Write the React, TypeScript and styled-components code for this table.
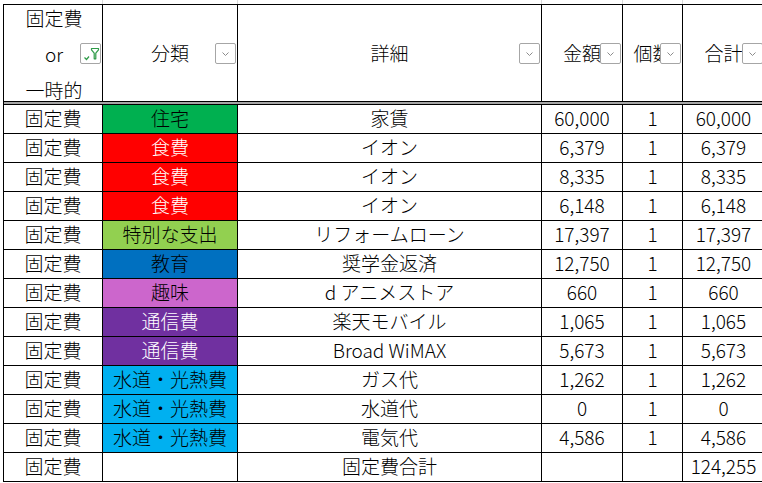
import React from "react";
import styled, { createGlobalStyle } from "styled-components";

const GlobalStyle = createGlobalStyle`
	html, body {
		margin: 0;
		padding: 0;
		background: #ffffff;
		overflow: hidden;
	}
	body {
		font-family: "Noto Sans CJK JP", "Noto Sans", sans-serif;
		font-weight: 300;
		color: #000000;
	}
`;

const COLUMNS = "99px 135px 304px 81px 60px 82px";

type Category = { bg: string; fg: string };

const CATEGORIES: Record<string, Category> = {
	住宅: { bg: "#00b050", fg: "#000000" },
	食費: { bg: "#ff0000", fg: "#ffffff" },
	特別な支出: { bg: "#92d050", fg: "#000000" },
	教育: { bg: "#0070c0", fg: "#000000" },
	趣味: { bg: "#cc66cc", fg: "#000000" },
	通信費: { bg: "#7030a0", fg: "#ffffff" },
	"水道・光熱費": { bg: "#00b0f0", fg: "#000000" },
};

const rows = [
	["固定費", "住宅", "家賃", "60,000", "1", "60,000"],
	["固定費", "食費", "イオン", "6,379", "1", "6,379"],
	["固定費", "食費", "イオン", "8,335", "1", "8,335"],
	["固定費", "食費", "イオン", "6,148", "1", "6,148"],
	["固定費", "特別な支出", "リフォームローン", "17,397", "1", "17,397"],
	["固定費", "教育", "奨学金返済", "12,750", "1", "12,750"],
	["固定費", "趣味", "d アニメストア", "660", "1", "660"],
	["固定費", "通信費", "楽天モバイル", "1,065", "1", "1,065"],
	["固定費", "通信費", "Broad WiMAX", "5,673", "1", "5,673"],
	["固定費", "水道・光熱費", "ガス代", "1,262", "1", "1,262"],
	["固定費", "水道・光熱費", "水道代", "0", "1", "0"],
	["固定費", "水道・光熱費", "電気代", "4,586", "1", "4,586"],
	["固定費", "", "固定費合計", "", "", "124,255"],
];

const headers = ["分類", "詳細", "金額", "個数", "合計"];

const Chevron = () => (
	<svg width="9" height="6" viewBox="0 0 9 6">
		<path d="M1.5 1.5 L4.5 4.5 L7.5 1.5" fill="none" stroke="#8c8c8c" strokeWidth="1" />
	</svg>
);

const FilterOn = () => (
	<svg width="18" height="18" viewBox="0 0 18 18">
		<path d="M2.5 12.5 L4.5 14.5 L7 11.5" fill="none" stroke="#2e9b48" strokeWidth="1.2" />
		<path
			d="M9.5 3.5 H16.5 V4.8 L13.8 8.2 V13.8 H12.2 V8.2 L9.5 4.8 Z"
			fill="none"
			stroke="#2e9b48"
			strokeWidth="1.2"
			strokeLinejoin="round"
		/>
	</svg>
);

export default function App() {
	return (
		<>
			<GlobalStyle />
			<Page>
				<TopStrip>
					{[0, 1, 2, 3, 4, 5].map((i) => (
						<StripCell key={i} />
					))}
				</TopStrip>
				<Sheet>
					<HeaderCell>
						<HeaderStack>
							<span>固定費</span>
							<span>or</span>
							<span>一時的</span>
						</HeaderStack>
						<DropButton>
							<FilterOn />
						</DropButton>
					</HeaderCell>
					{headers.map((h) => (
						<HeaderCell key={h}>
							<HeaderLabel>{h}</HeaderLabel>
							<DropButton>
								<Chevron />
							</DropButton>
						</HeaderCell>
					))}
					<PaneSplit />
					{rows.map((r, i) => {
						const cat = CATEGORIES[r[1]];
						return (
							<React.Fragment key={i}>
								<Cell>{r[0]}</Cell>
								<Cell $bg={cat?.bg} $fg={cat?.fg}>
									{r[1]}
								</Cell>
								<Cell>{r[2]}</Cell>
								<Cell>{r[3]}</Cell>
								<Cell>{r[4]}</Cell>
								<Cell>{r[5]}</Cell>
							</React.Fragment>
						);
					})}
				</Sheet>
			</Page>
		</>
	);
}

const Page = styled.div`
	padding-left: 3px;
	width: 765px;
`;

const TopStrip = styled.div`
	display: grid;
	grid-template-columns: ${COLUMNS};
	margin-left: 1px;
	height: 4px;
`;

const StripCell = styled.div`
	border-right: 1px solid #d9d9d9;
`;

const Sheet = styled.div`
	display: grid;
	grid-template-columns: ${COLUMNS};
	border-left: 1px solid #000000;
	border-top: 1px solid #000000;
`;

const HeaderCell = styled.div`
	position: relative;
	box-sizing: border-box;
	height: 97px;
	border-right: 1px solid #000000;
	border-bottom: 1px solid #000000;
	display: flex;
	align-items: center;
	justify-content: center;
	font-size: 19px;
`;

const HeaderStack = styled.div`
	display: flex;
	flex-direction: column;
	align-items: center;
	gap: 14px;
	line-height: 22px;
	margin-left: 2px;
	margin-top: 2px;
`;

const HeaderLabel = styled.span`
	line-height: 22px;
	white-space: nowrap;
`;

const DropButton = styled.div`
	position: absolute;
	right: 1px;
	top: 38px;
	box-sizing: border-box;
	width: 21px;
	height: 21px;
	background: #ffffff;
	border: 1px solid #a6a6a6;
	border-radius: 2px;
	display: flex;
	align-items: center;
	justify-content: center;
`;

const PaneSplit = styled.div`
	grid-column: 1 / -1;
	height: 2px;
	background: #a6a6a6;
	border-bottom: 1px solid #000000;
`;

const Cell = styled.div<{ $bg?: string; $fg?: string }>`
	box-sizing: border-box;
	height: 29px;
	border-right: 1px solid #000000;
	border-bottom: 1px solid #000000;
	background: ${(p) => p.$bg ?? "transparent"};
	color: ${(p) => p.$fg ?? "#000000"};
	display: flex;
	align-items: center;
	justify-content: center;
	padding-bottom: 3px;
	font-size: 19px;
	line-height: 22px;
	white-space: nowrap;
`;
